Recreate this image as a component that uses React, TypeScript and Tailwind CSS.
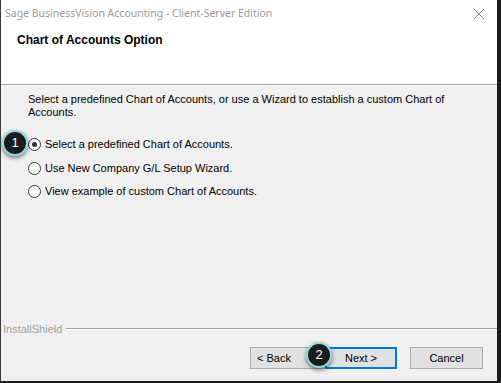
import React from "react";

const Radio = ({ checked, label }: { checked?: boolean; label: string }) => (
  <div className="flex items-center h-[23.5px]">
    <span className="w-[13px] h-[13px] rounded-full border border-[#333] bg-white flex items-center justify-center">
      {checked && <span className="w-[5px] h-[5px] rounded-full bg-[#333]" />}
    </span>
    <span className="ml-[4px]">{label}</span>
  </div>
);

const Callout = ({ n, className }: { n: string; className: string }) => (
  <div
    className={`absolute w-[26px] h-[26px] rounded-full bg-[#1c1c1c] border-2 border-[#8fdcdc] flex items-center justify-center text-white text-[13px] shadow-[0_2px_4px_rgba(0,0,0,0.5)] font-['Liberation_Sans',sans-serif] ${className}`}
  >
    {n}
  </div>
);

export default function App() {
  return (
    <div className="w-[501px] h-[383px] bg-[#1d1d1d] overflow-hidden">
      <div className="relative w-[497px] h-[381px] border-l border-[#3a3a3a] bg-[#f0f0f0] flex flex-col">
        {/* title bar + header */}
        <div className="bg-white h-[85px] flex flex-col border-b border-[#a0a0a0]">
          <div className="h-[28px] flex items-center justify-between pl-[4px] pr-[10px]">
            <span className="text-[10.5px] text-[#9a9a9a] font-['Noto_Sans',sans-serif]">
              Sage BusinessVision Accounting - Client-Server Edition
            </span>
            <svg width="12" height="12" viewBox="0 0 12 12" className="mr-[2px]">
              <path d="M1 1 L11 11 M11 1 L1 11" stroke="#8a8a8a" strokeWidth="1" />
            </svg>
          </div>
          <div className="pl-[16px] pt-[3px] font-bold text-[12px] text-black font-['Liberation_Sans',sans-serif]">
            Chart of Accounts Option
          </div>
        </div>
        <div className="h-[1px] bg-white" />

        {/* body */}
        <div className="flex-1 flex flex-col px-[27px] pt-[7px] text-[11px] text-black font-['Liberation_Sans',sans-serif] leading-[13px]">
          <p className="w-[440px]">
            Select a predefined Chart of Accounts, or use a Wizard to establish a custom Chart of Accounts.
          </p>
          <div className="mt-[14px] flex flex-col">
            <Radio checked label="Select a predefined Chart of Accounts." />
            <Radio label="Use New Company G/L Setup Wizard." />
            <Radio label="View example of custom Chart of Accounts." />
          </div>
        </div>

        {/* footer */}
        <div className="flex items-center pl-[2px] h-[14px] text-[11px] text-[#a0a0a0] font-['Liberation_Sans',sans-serif]">
          <span>InstallShield</span>
          <div className="flex-1 ml-[4px] h-[1px] bg-[#a0a0a0] border-b border-white box-content" />
        </div>
        <div className="h-[45px] flex items-start justify-end pr-[14px] pt-[11px] text-[11px] text-black font-['Liberation_Sans',sans-serif]">
          <button className="w-[75px] h-[22px] bg-[#e1e1e1] border border-[#adadad] pl-[6px] text-left">
            &lt; Back
          </button>
          <button className="w-[72px] h-[22px] bg-[#e1e1e1] border-2 border-[#0078d7]">
            Next &gt;
          </button>
          <button className="ml-[13px] w-[73px] h-[22px] bg-[#e1e1e1] border border-[#adadad]">
            Cancel
          </button>
        </div>

        <Callout n="1" className="left-[1px] top-[130px]" />
        <Callout n="2" className="left-[305px] top-[342px]" />
      </div>
    </div>
  );
}
